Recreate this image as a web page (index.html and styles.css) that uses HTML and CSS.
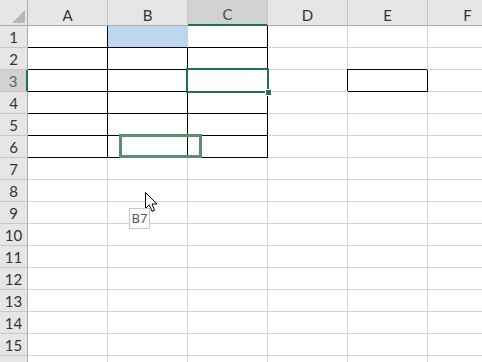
FILE: index.html
```html
<!DOCTYPE html>
<html>
<head>
    <title>Sheet1</title>
    <link rel="stylesheet" href="styles.css">
</head>
<body>

    <div class="sheet">
        <div class="corner"></div>
        <div class="h">A</div>
        <div class="h">B</div>
        <div class="h h-on">C</div>
        <div class="h">D</div>
        <div class="h">E</div>
        <div class="h">F</div>

        <div class="rh">1</div>
        <div class="c kr kb"></div>
        <div class="c fill kb"></div>
        <div class="c kr kb"></div>
        <div class="c"></div>
        <div class="c"></div>
        <div class="c"></div>

        <div class="rh">2</div>
        <div class="c kr kb"></div>
        <div class="c kr kb"></div>
        <div class="c kr kb"></div>
        <div class="c"></div>
        <div class="c"></div>
        <div class="c"></div>

        <div class="rh rh-on">3</div>
        <div class="c kr kb"></div>
        <div class="c kr kb"></div>
        <div class="c kr kb"></div>
        <div class="c"></div>
        <div class="c boxed"></div>
        <div class="c"></div>

        <div class="rh">4</div>
        <div class="c kr kb"></div>
        <div class="c kr kb"></div>
        <div class="c kr kb"></div>
        <div class="c"></div>
        <div class="c"></div>
        <div class="c"></div>

        <div class="rh">5</div>
        <div class="c kr kb"></div>
        <div class="c kr kb"></div>
        <div class="c kr kb"></div>
        <div class="c"></div>
        <div class="c"></div>
        <div class="c"></div>

        <div class="rh">6</div>
        <div class="c kr kb"></div>
        <div class="c kr kb"></div>
        <div class="c kr kb"></div>
        <div class="c"></div>
        <div class="c"></div>
        <div class="c"></div>

        <div class="rh">7</div>
        <div class="c"></div><div class="c"></div><div class="c"></div>
        <div class="c"></div><div class="c"></div><div class="c"></div>

        <div class="rh">8</div>
        <div class="c"></div><div class="c"></div><div class="c"></div>
        <div class="c"></div><div class="c"></div><div class="c"></div>

        <div class="rh">9</div>
        <div class="c"></div><div class="c"></div><div class="c"></div>
        <div class="c"></div><div class="c"></div><div class="c"></div>

        <div class="rh">10</div>
        <div class="c"></div><div class="c"></div><div class="c"></div>
        <div class="c"></div><div class="c"></div><div class="c"></div>

        <div class="rh">11</div>
        <div class="c"></div><div class="c"></div><div class="c"></div>
        <div class="c"></div><div class="c"></div><div class="c"></div>

        <div class="rh">12</div>
        <div class="c"></div><div class="c"></div><div class="c"></div>
        <div class="c"></div><div class="c"></div><div class="c"></div>

        <div class="rh">13</div>
        <div class="c"></div><div class="c"></div><div class="c"></div>
        <div class="c"></div><div class="c"></div><div class="c"></div>

        <div class="rh">14</div>
        <div class="c"></div><div class="c"></div><div class="c"></div>
        <div class="c"></div><div class="c"></div><div class="c"></div>

        <div class="rh">15</div>
        <div class="c"></div><div class="c"></div><div class="c"></div>
        <div class="c"></div><div class="c"></div><div class="c"></div>

        <div class="rh">16</div>
        <div class="c"></div><div class="c"></div><div class="c"></div>
        <div class="c"></div><div class="c"></div><div class="c"></div>

        <!-- active cell C3 -->
        <div class="sel"><span class="handle"></span></div>
        <!-- cell being dragged -->
        <div class="drag"></div>
        <!-- mouse pointer and target tip -->
        <svg class="pointer" width="13" height="21" viewBox="0 0 13 21">
            <path d="M0.5 0.5 L0.5 16.5 L4.3 12.9 L7 19.3 L9.6 18.2 L7 12 L12 12 Z" fill="#fff" stroke="#000" stroke-width="1" stroke-linejoin="miter"/>
        </svg>
        <div class="tip">B7</div>
    </div>

</body>
</html>
```

FILE: styles.css
```css
*
{
	margin: 0;
	padding: 0;
	box-sizing: border-box;
}
body
{
	background: #fff;
	overflow: hidden;
	font-family: Lato, "Open Sans", sans-serif;
}

.sheet
{
	position: relative;
	display: grid;
	grid-template-columns: 28px repeat(6, 80px);
	grid-template-rows: 26px repeat(16, 22px);
}

/* headers */
.corner
{
	position: relative;
	background: #e6e6e6;
	border-right: 1px solid #ababab;
	border-bottom: 1px solid #ababab;
}
.corner::after
{
	content: "";
	position: absolute;
	left: 12px;
	top: 10px;
	width: 13px;
	height: 13px;
	background: #b7b7b7;
	clip-path: polygon(100% 0, 100% 100%, 0 100%);
}
.h
{
	display: flex;
	align-items: center;
	justify-content: center;
	padding-top: 4px;
	background: #e6e6e6;
	border-right: 1px solid #c6c6c6;
	border-bottom: 1px solid #ababab;
	color: #333;
	font-size: 15px;
}
.h-on
{
	background: #d2d2d2;
	color: #4d4d4d;
	border-bottom: 2px solid #217346;
}
.rh
{
	display: flex;
	align-items: center;
	justify-content: center;
	background: #e6e6e6;
	border-right: 1px solid #ababab;
	border-bottom: 1px solid #c6c6c6;
	color: #333;
	font-size: 15px;
}
.rh-on
{
	background: #d2d2d2;
	color: #55695d;
	border-right: 2px solid #217346;
}

/* cells */
.c
{
	border-right: 1px solid #d4d4d4;
	border-bottom: 1px solid #d4d4d4;
}
.kr { border-right-color: #000; }
.kb { border-bottom-color: #000; }
.fill
{
	background: #bdd7ee;
	border-right-color: #bdd7ee;
}
.boxed
{
	border-right-color: #000;
	border-bottom-color: #000;
	box-shadow: -1px -1px 0 #000;
}

/* overlays */
.sel
{
	position: absolute;
	left: 186px;
	top: 68px;
	width: 83px;
	height: 25px;
	border: 2px solid #217346;
}
.handle
{
	position: absolute;
	right: -5px;
	bottom: -5px;
	width: 7px;
	height: 7px;
	background: #217346;
	border: 1px solid #fff;
}
.drag
{
	position: absolute;
	left: 119px;
	top: 134px;
	width: 83px;
	height: 24px;
	border: 3px solid #5e8d6f;
}
.pointer
{
	position: absolute;
	left: 145px;
	top: 192px;
}
.tip
{
	position: absolute;
	left: 129px;
	top: 208px;
	width: 21px;
	height: 21px;
	background: #fff;
	border: 1px solid #c8c8c8;
	color: #595959;
	font: 13px "Noto Sans", sans-serif;
	line-height: 19px;
	text-align: center;
}
```
